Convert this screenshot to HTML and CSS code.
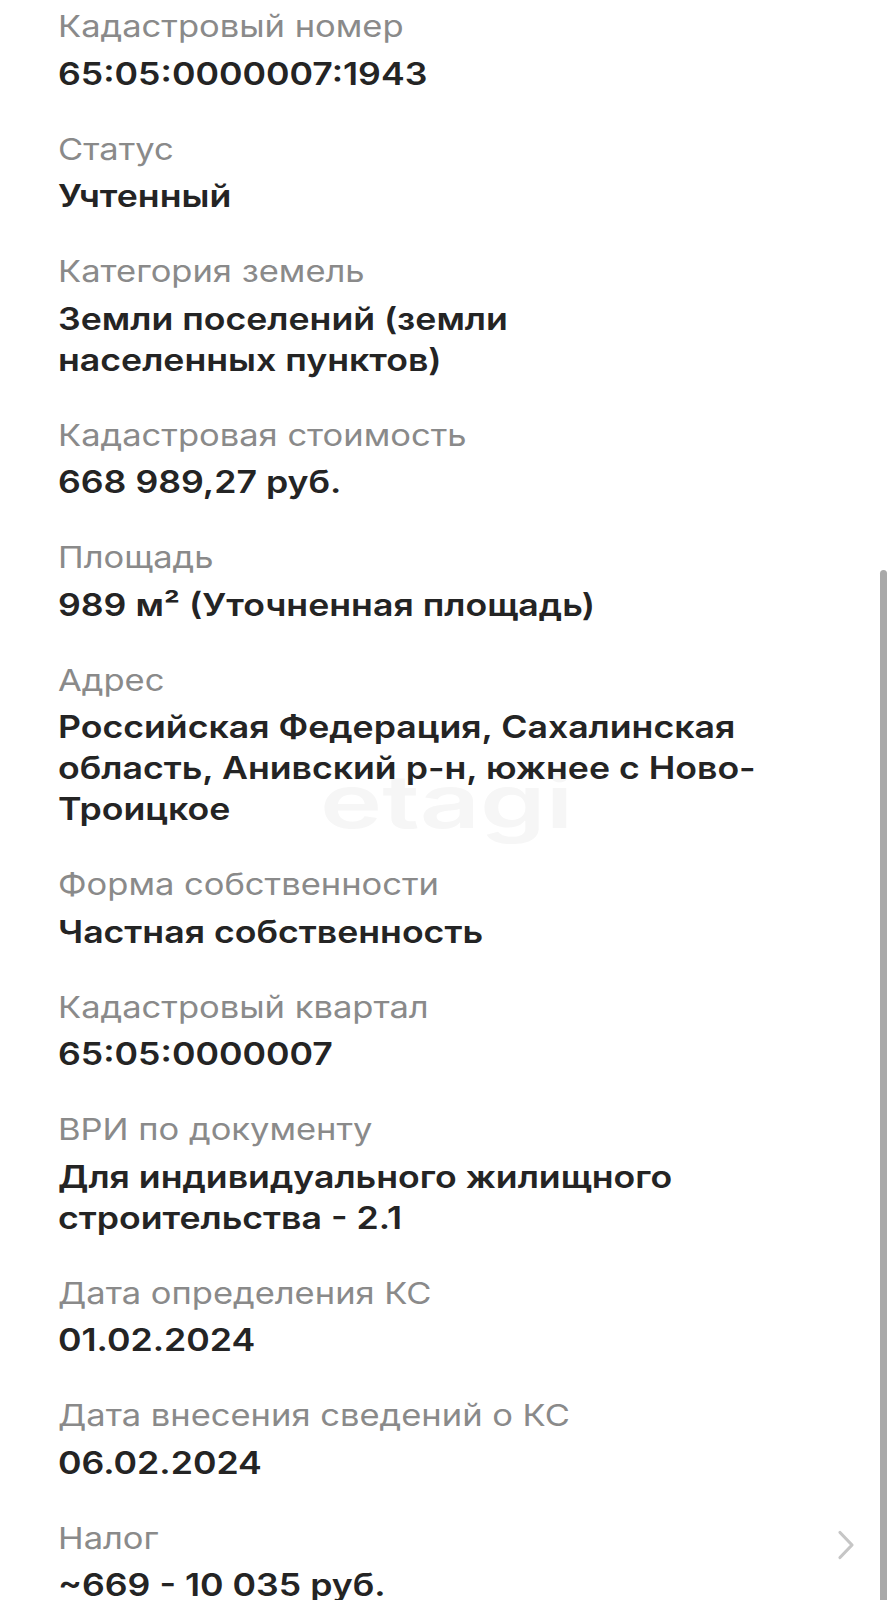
FILE: index.html
```html
<!DOCTYPE html>
<html lang="ru">
<head>
<meta charset="utf-8">
<link rel="stylesheet" href="styles.css">
</head>
<body>
<div class="screen">
  <div class="watermark" aria-hidden="true">etagi</div>
  <dl class="list">
    <div class="item"><dt>Кадастровый номер</dt><dd>65:05:0000007:1943</dd></div>
    <div class="item"><dt>Статус</dt><dd>Учтенный</dd></div>
    <div class="item"><dt>Категория земель</dt><dd>Земли поселений (земли<br>населенных пунктов)</dd></div>
    <div class="item"><dt>Кадастровая стоимость</dt><dd>668 989,27 руб.</dd></div>
    <div class="item"><dt>Площадь</dt><dd>989 м² (Уточненная площадь)</dd></div>
    <div class="item"><dt>Адрес</dt><dd>Российская Федерация, Сахалинская<br>область, Анивский р-н, южнее с Ново-<br>Троицкое</dd></div>
    <div class="item"><dt>Форма собственности</dt><dd>Частная собственность</dd></div>
    <div class="item"><dt>Кадастровый квартал</dt><dd>65:05:0000007</dd></div>
    <div class="item"><dt>ВРИ по документу</dt><dd>Для индивидуального жилищного<br>строительства - 2.1</dd></div>
    <div class="item"><dt>Дата определения КС</dt><dd>01.02.2024</dd></div>
    <div class="item"><dt>Дата внесения сведений о КС</dt><dd>06.02.2024</dd></div>
    <div class="item"><dt>Налог</dt><dd>~669 - 10 035 руб.</dd>
      <svg class="chevron" width="20" height="32" viewBox="0 0 20 32"><path d="M4 3.5 L16 16 L4 28.5" fill="none" stroke="#c6c6c6" stroke-width="3.2" stroke-linecap="round" stroke-linejoin="round"/></svg>
    </div>
  </dl>
  <div class="scrollbar"></div>
</div>
</body>
</html>
```
FILE: styles.css
```css
* { box-sizing: border-box; }
html, body { margin: 0; padding: 0; background: #ffffff; }
body { font-family: Inter, "Noto Sans", "Liberation Sans", sans-serif; }
.screen { position: relative; width: 893px; height: 1600px; overflow: hidden; background: #ffffff; }
.list { position: relative; margin: 0; padding: 6px 0 0 58px; display: flex; flex-direction: column; gap: 35px; }
.item { position: relative; display: flex; flex-direction: column; align-items: flex-start; }
dt { font-size: 30px; line-height: 40px; color: #8a8a8a; font-weight: 400; margin-bottom: 6.5px; white-space: nowrap; transform: scaleX(1.15); transform-origin: left center; }
dd { margin: 0; font-size: 31px; line-height: 41px; color: #242424; font-weight: 600; white-space: nowrap; transform: scaleX(1.15); transform-origin: left center; }
.chevron { position: absolute; right: 37px; top: 11px; }
.item:last-child { align-self: stretch; }
.watermark { position: absolute; left: 320px; top: 764px; font-size: 74px; line-height: 74px; font-weight: 600; color: #f6f6f6; transform: scaleX(1.42); transform-origin: left top; pointer-events: none; }
.scrollbar { position: absolute; left: 880px; top: 570px; width: 7px; height: 1040px; background: #a9a9a9; border-radius: 4px; }
```
